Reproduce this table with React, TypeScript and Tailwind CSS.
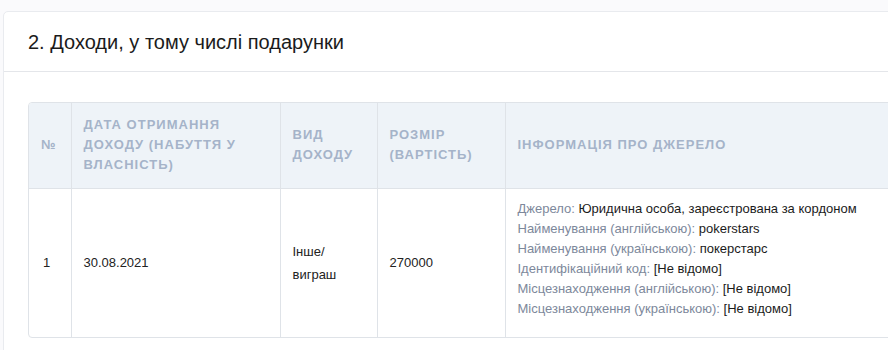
const infoRows: [string, string][] = [
  ['Джерело:', 'Юридична особа, зареєстрована за кордоном'],
  ['Найменування (англійською):', 'pokerstars'],
  ['Найменування (українською):', 'покерстарс'],
  ['Ідентифікаційний код:', '[Не відомо]'],
  ['Місцезнаходження (англійською):', '[Не відомо]'],
  ['Місцезнаходження (українською):', '[Не відомо]'],
];

const th = 'border-r border-[#dfe3e8] px-[12px] text-left align-middle text-[13px] font-bold uppercase leading-5 tracking-[1px] text-[#a5b3c9]';
const td = 'border-r border-[#dfe3e8] px-[12px] align-middle text-[13px] leading-[23px] text-[#222]';

export default function App() {
  return (
    <div className="min-h-[350px] w-[888px] overflow-hidden bg-[#fafafc] pl-[3px] pt-[11px] font-['Liberation_Sans',Arial,sans-serif]">
      <div className="w-[1000px] rounded-tl-[5px] border border-[#e9ebef] bg-white">
        <div className="flex h-[60px] items-center border-b border-[#e4e6ea] px-[24px]">
          <h2 className="text-[20px] font-normal text-[#1b1b1b]">2. Доходи, у тому числі подарунки</h2>
        </div>
        <div className="pl-[24px] pt-[30px] pb-[12px]">
          <div className="w-[960px] overflow-hidden rounded-[4px] border border-[#dfe3e8]">
            <table className="w-full border-collapse">
              <thead>
                <tr className="h-[85px] border-b border-[#dfe3e8] bg-[#eef3f8]">
                  <th className={`${th} w-[42px] px-0 text-center tracking-normal`}>№</th>
                  <th className={`${th} w-[209px]`}>Дата отримання доходу (набуття у власність)</th>
                  <th className={`${th} w-[97px]`}>Вид доходу</th>
                  <th className={`${th} w-[128px]`}>Розмір (вартість)</th>
                  <th className={`${th} border-r-0`}>Інформація про джерело</th>
                </tr>
              </thead>
              <tbody>
                <tr className="h-[149px]">
                  <td className={`${td} pl-[14px]`}>1</td>
                  <td className={td}>30.08.2021</td>
                  <td className={td}>Інше/ виграш</td>
                  <td className={td}>270000</td>
                  <td className="px-[12px] pt-[10px] pb-[18px] align-middle text-[13px] leading-5">
                    {infoRows.map(([label, value]) => (
                      <div key={label}>
                        <span className="text-[#7d889b]">{label}</span>{' '}
                        <span className="text-[#1b1b1b]">{value}</span>
                      </div>
                    ))}
                  </td>
                </tr>
              </tbody>
            </table>
          </div>
        </div>
      </div>
    </div>
  );
}
